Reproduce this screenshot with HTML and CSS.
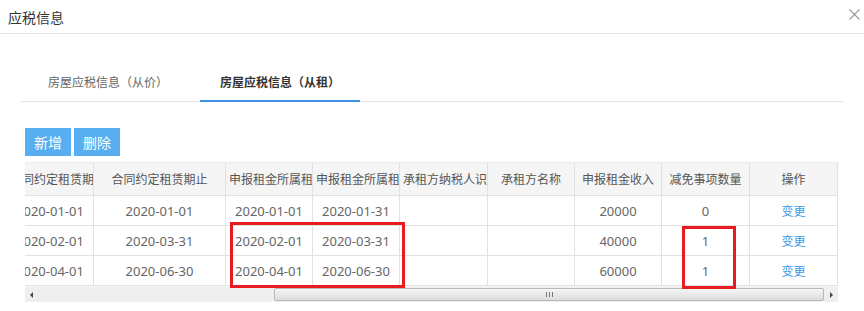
FILE: index.html
```html
<!doctype html>
<html><head>
<meta charset="utf-8">
<title>应税信息</title>
<link rel="stylesheet" href="styles.css">
</head>
<body>
<div class="dialog">
	<div class="dlg-head">
		<span class="dlg-title">应税信息</span>
		<svg class="dlg-close" width="11" height="11" viewBox="0 0 11 11"><path d="M0.5 0.5 L10.5 10.5 M10.5 0.5 L0.5 10.5" stroke="#9a9a9a" stroke-width="1.1" fill="none"/></svg>
	</div>
	<div class="dlg-body">
		<ul class="tabs">
			<li>房屋应税信息（从价）</li>
			<li class="active">房屋应税信息（从租）</li>
		</ul>
		<div class="toolbar">
			<button class="btn">新增</button>
			<button class="btn">删除</button>
		</div>
		<div class="grid">
			<div class="grid-view">
				<table class="grid-table">
					<thead>
					<tr>
						<th class="w87">合同约定租赁期起</th>
						<th class="w132">合同约定租赁期止</th>
						<th class="w87">申报租金所属租赁期起</th>
						<th class="w87">申报租金所属租赁期止</th>
						<th class="w88">承租方纳税人识别号</th>
						<th class="w87">承租方名称</th>
						<th class="w87">申报租金收入</th>
						<th class="w88">减免事项数量</th>
						<th class="w88">操作</th>
					</tr>
					</thead>
					<tbody>
					<tr>
						<td>2020-01-01</td><td>2020-01-01</td><td>2020-01-01</td><td>2020-01-31</td>
						<td></td><td></td><td>20000</td><td>0</td><td><a class="op" href="#">变更</a></td>
					</tr>
					<tr>
						<td>2020-02-01</td><td>2020-03-31</td><td>2020-02-01</td><td>2020-03-31</td>
						<td></td><td></td><td>40000</td><td>1</td><td><a class="op" href="#">变更</a></td>
					</tr>
					<tr>
						<td>2020-04-01</td><td>2020-06-30</td><td>2020-04-01</td><td>2020-06-30</td>
						<td></td><td></td><td>60000</td><td>1</td><td><a class="op" href="#">变更</a></td>
					</tr>
					</tbody>
				</table>
			</div>
			<div class="hscroll">
				<span class="arrow arrow-left"></span>
				<div class="track">
					<div class="thumb"><span class="grip"></span></div>
				</div>
				<span class="arrow arrow-right"></span>
			</div>
			<!-- red annotation boxes -->
			<div class="mark mark-dates"></div>
			<div class="mark mark-count"></div>
		</div>
	</div>
</div>
</body></html>
```

FILE: styles.css
```css
body {
	margin: 0;
	background: #fff;
	font-family: "Noto Sans", "Noto Sans CJK SC", sans-serif;
	color: #555;
}
.dialog { width: 864px; }

.dlg-head {
	height: 33px;
	border-bottom: 1px solid #e6e6e6;
	display: flex;
	align-items: center;
	justify-content: space-between;
	padding: 0 4px 0 8px;
}
.dlg-title {
	font-size: 14px;
	color: #333;
}
.dlg-close { margin-top: -4px; }

.dlg-body { padding: 0 21px; }

.tabs {
	list-style: none;
	margin: 32px 0 0 0;
	padding: 0 0 0 7px;
	display: flex;
	gap: 12px;
	border-bottom: 1px solid #e4e4e4;
}
.tabs li {
	font-size: 12px;
	line-height: 34px;
	padding: 0 20px;
	color: #666;
	border-bottom: 2px solid transparent;
	margin-bottom: -1px;
}
.tabs li.active {
	color: #333;
	font-weight: bold;
	border-bottom-color: #3d8fe6;
}

.toolbar {
	margin-top: 26px;
	padding-left: 4px;
	display: flex;
	gap: 3px;
}
.btn {
	height: 28px;
	padding: 0 9px;
	border: none;
	border-radius: 0;
	background: #57aef0;
	color: #fff;
	font-family: "Noto Sans CJK SC", sans-serif;
	font-size: 14px;
}

.grid {
	position: relative;
	margin: 6px 0 0 4px;
	width: 813px;
}
.grid-view { overflow: hidden; }
.grid-table {
	table-layout: fixed;
	width: 831px;
	margin-left: -18px;
	border-collapse: separate;
	border-spacing: 0;
}
.grid-table th, .grid-table td {
	box-sizing: border-box;
	border-right: 1px solid #e2e2e2;
	border-bottom: 1px solid #e2e2e2;
	padding: 0 3px;
	text-align: center;
	white-space: nowrap;
	overflow: hidden;
}
.grid-table th {
	height: 34px;
	border-top: 1px solid #ececec;
	background: #f5f5f5;
	font-weight: normal;
	font-size: 12px;
	color: #555;
}
.grid-table td {
	height: 30px;
	font-size: 13px;
	color: #666;
}
.w87 { width: 87px; }
.w88 { width: 88px; }
.w132 { width: 132px; }

a.op {
	font-size: 12px;
	color: #3c9be6;
	text-decoration: none;
}

.hscroll {
	height: 15px;
	display: flex;
	align-items: center;
	background: #efefef;
	border-top: 1px solid #f7f7f7;
}
.track {
	flex: 1;
	height: 100%;
	display: flex;
	align-items: center;
	padding-left: 236px;
}
.thumb {
	flex: 1;
	height: 11px;
	border: 1px solid #b9b9b9;
	border-radius: 2px;
	background: linear-gradient(#f6f6f6, #dcdcdc);
	display: flex;
	align-items: center;
	justify-content: center;
}
.grip {
	width: 5px;
	height: 5px;
	border-left: 1px solid #777;
	border-right: 1px solid #777;
	background: linear-gradient(90deg, transparent 2px, #777 2px, #777 3px, transparent 3px);
}
.arrow {
	width: 0;
	height: 0;
	border-top: 3px solid transparent;
	border-bottom: 3px solid transparent;
}
.arrow-left {
	border-right: 3px solid #444;
	margin: 0 5px 0 5px;
}
.arrow-right {
	border-left: 3px solid #444;
	margin: 0 5px 0 6px;
}

.mark {
	position: absolute;
	border: 3px solid #e81a22;
	box-sizing: border-box;
}
.mark-dates {
	left: 205px;
	top: 60px;
	width: 175px;
	height: 66px;
}
.mark-count {
	left: 657px;
	top: 64px;
	width: 54px;
	height: 63px;
}
```
